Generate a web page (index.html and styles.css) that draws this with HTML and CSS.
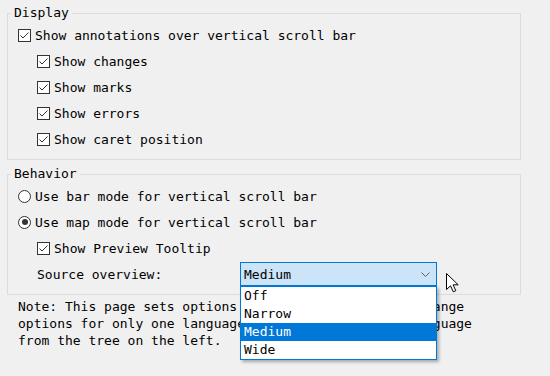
FILE: index.html
```html
<!DOCTYPE html>
<html>
	<head>
		<meta charset="utf-8">
		<title>Scroll Bars</title>
		<link rel="stylesheet" href="styles.css">
	</head>
	<body>
		<div class="page">
			<fieldset class="group">
				<legend>Display</legend>
				<div class="row">
					<svg class="check" width="13" height="13" viewBox="0 0 13 13"><rect x="0.5" y="0.5" width="12" height="12" fill="#fff" stroke="#333"/><path d="M2.5 6.5 L5 9 L10.5 3.5" fill="none" stroke="#333" stroke-width="1"/></svg>
					<span>Show annotations over vertical scroll bar</span>
				</div>
				<div class="row sub">
					<svg class="check" width="13" height="13" viewBox="0 0 13 13"><rect x="0.5" y="0.5" width="12" height="12" fill="#fff" stroke="#333"/><path d="M2.5 6.5 L5 9 L10.5 3.5" fill="none" stroke="#333" stroke-width="1"/></svg>
					<span>Show changes</span>
				</div>
				<div class="row sub">
					<svg class="check" width="13" height="13" viewBox="0 0 13 13"><rect x="0.5" y="0.5" width="12" height="12" fill="#fff" stroke="#333"/><path d="M2.5 6.5 L5 9 L10.5 3.5" fill="none" stroke="#333" stroke-width="1"/></svg>
					<span>Show marks</span>
				</div>
				<div class="row sub">
					<svg class="check" width="13" height="13" viewBox="0 0 13 13"><rect x="0.5" y="0.5" width="12" height="12" fill="#fff" stroke="#333"/><path d="M2.5 6.5 L5 9 L10.5 3.5" fill="none" stroke="#333" stroke-width="1"/></svg>
					<span>Show errors</span>
				</div>
				<div class="row sub">
					<svg class="check" width="13" height="13" viewBox="0 0 13 13"><rect x="0.5" y="0.5" width="12" height="12" fill="#fff" stroke="#333"/><path d="M2.5 6.5 L5 9 L10.5 3.5" fill="none" stroke="#333" stroke-width="1"/></svg>
					<span>Show caret position</span>
				</div>
			</fieldset>

			<fieldset class="group second">
				<legend>Behavior</legend>
				<div class="row">
					<span class="radio"></span>
					<span>Use bar mode for vertical scroll bar</span>
				</div>
				<div class="row">
					<span class="radio on"></span>
					<span>Use map mode for vertical scroll bar</span>
				</div>
				<div class="row sub">
					<svg class="check" width="13" height="13" viewBox="0 0 13 13"><rect x="0.5" y="0.5" width="12" height="12" fill="#fff" stroke="#333"/><path d="M2.5 6.5 L5 9 L10.5 3.5" fill="none" stroke="#333" stroke-width="1"/></svg>
					<span>Show Preview Tooltip</span>
				</div>
				<div class="row sub">
					<span class="label">Source overview:</span>
					<div class="combo">
						<span>Medium</span>
						<svg class="chevron" width="9" height="5" viewBox="0 0 9 5"><path d="M0.5 0.5 L4.5 4.5 L8.5 0.5" fill="none" stroke="#606060"/></svg>
						<ul class="list">
							<li>Off</li>
							<li>Narrow</li>
							<li class="current">Medium</li>
							<li>Wide</li>
						</ul>
					</div>
				</div>
			</fieldset>

			<p class="note">Note: This page sets options for all languages. To change options for only one language, select the desired language from the tree on the left.</p>

			<svg class="cursor" width="14" height="20" viewBox="0 0 14 20"><path d="M0.5 0.5 L0.5 16.5 L4.5 12.8 L7.3 18.8 L9.8 17.7 L7.1 11.8 L12.2 11.8 Z" fill="#fff" stroke="#000" stroke-linejoin="round"/></svg>
		</div>
	</body>
</html>
```

FILE: styles.css
```css
* {
	margin: 0;
	padding: 0;
}

body {
	background-color: #f0f0f0;
	color: #000;
	font-family: "DejaVu Sans Mono", "Liberation Mono", monospace;
	font-size: 13px;
	line-height: 17px;
}

ul {
	list-style: none;
}

.page {
	position: relative;
	width: 550px;
	height: 376px;
	padding-top: 4px;
	box-sizing: border-box;
}

.group {
	width: 514px;
	margin-left: 7px;
	box-sizing: border-box;
	border: 1px solid #dcdcdc;
	padding: 0 0 7px 10px;
}

.group.second {
	margin-top: 5px;
}

.group legend {
	line-height: 18px;
	padding: 0 3px;
	margin-left: -7px;
}

.row {
	display: flex;
	align-items: center;
	height: 26px;
	gap: 4px;
}

.row.sub {
	margin-left: 19px;
}

.check {
	display: block;
	flex: none;
}

.radio {
	display: block;
	flex: none;
	width: 13px;
	height: 13px;
	box-sizing: border-box;
	border: 1px solid #333;
	border-radius: 50%;
	background-color: #fff;
	position: relative;
}

.radio.on::after {
	content: "";
	position: absolute;
	left: 2.5px;
	top: 2.5px;
	width: 6px;
	height: 6px;
	border-radius: 50%;
	background-color: #333;
}

.label {
	width: 199px;
}

.combo {
	position: relative;
	display: flex;
	align-items: center;
	justify-content: space-between;
	width: 197px;
	height: 24px;
	box-sizing: border-box;
	border: 1px solid #0078d7;
	background-color: #cce4f7;
	padding: 0 6px 0 3px;
}

.chevron {
	display: block;
}

.list {
	position: absolute;
	left: -1px;
	top: 23px;
	width: 197px;
	box-sizing: border-box;
	border: 1px solid #0078d7;
	background-color: #fff;
	box-shadow: 2px 2px 3px rgba(0, 0, 0, 0.3);
	z-index: 2;
}

.list li {
	height: 18px;
	line-height: 18px;
	padding-left: 3px;
}

.list li.current {
	background-color: #0078d7;
	color: #fff;
}

.note {
	width: 470px;
	margin: 3px 0 0 18px;
	line-height: 17px;
}

.cursor {
	position: absolute;
	left: 446px;
	top: 273px;
}
```
